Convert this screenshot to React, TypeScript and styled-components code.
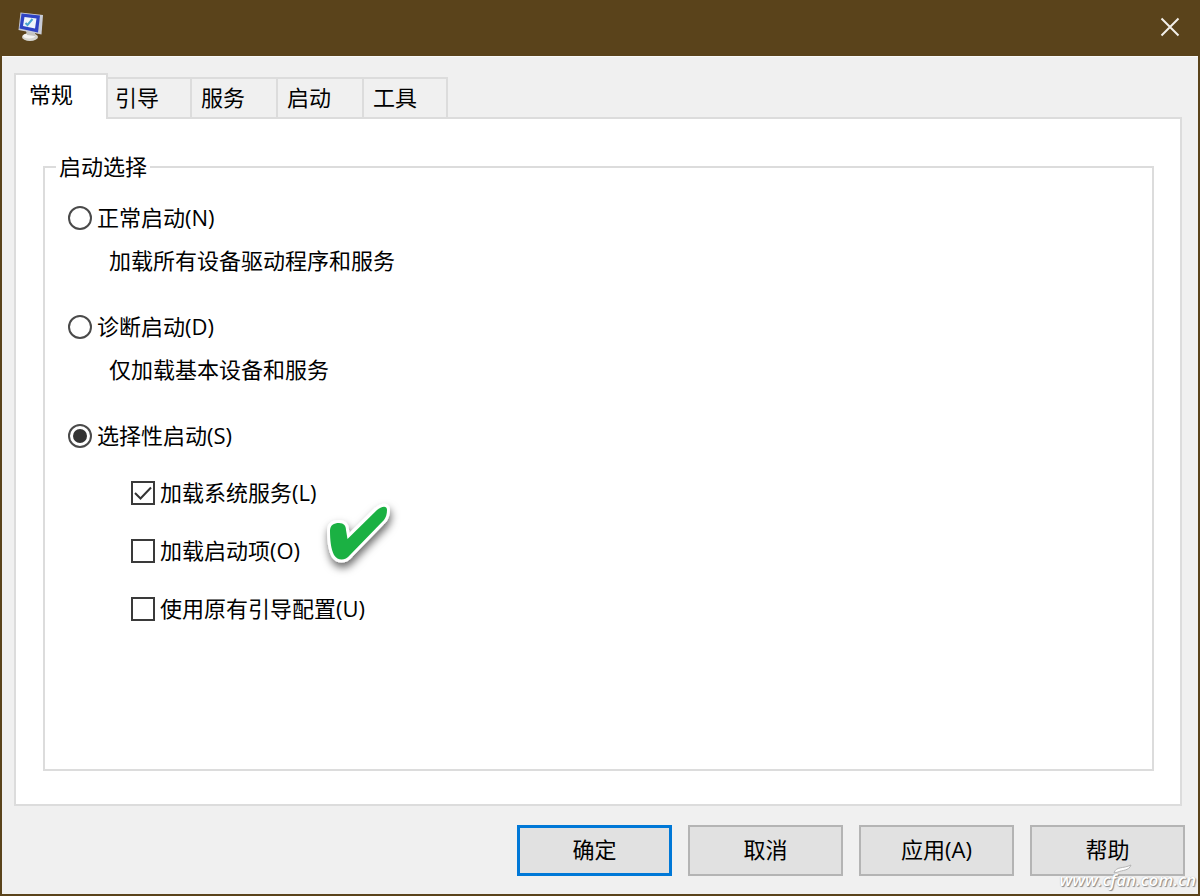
import React, { useState } from "react";
import styled, { createGlobalStyle } from "styled-components";

const FONT = '"Open Sans", "Noto Sans CJK SC", sans-serif';
const LINE = "#dcdcdc";
const FACE = "#f0f0f0";
const FRAME = "#5a431b";
const INK = "#000";

const GlobalStyle = createGlobalStyle`
  *, *::before, *::after { box-sizing: border-box; }
  body { margin: 0; background: ${FACE}; }
  button, input { font: inherit; color: inherit; margin: 0; }
`;

const Window = styled.div`
  position: relative;
  display: flex;
  flex-direction: column;
  min-height: 100vh;
  border: 2px solid ${FRAME};
  border-top: 0;
  background: ${FACE};
  color: ${INK};
  font-family: ${FONT};
  font-size: 22px;
  line-height: 28px;
`;

const TitleBar = styled.header`
  display: flex;
  align-items: center;
  justify-content: space-between;
  height: 56px;
  padding: 0 16px 2px 14px;
  background: ${FRAME};
`;

const CloseButton = styled.button`
  display: flex;
  padding: 0;
  border: 0;
  background: none;
`;

const Content = styled.main`
  flex: 1;
  display: flex;
  flex-direction: column;
  padding: 16px 16px 0 12px;
  border-top: 1px solid #fafafa;
`;

const TabList = styled.div`
  display: flex;
  align-items: flex-end;
  padding-left: 4px;
`;

const Tab = styled.button<{ $active: boolean }>`
  position: relative;
  z-index: ${(p) => (p.$active ? 1 : 0)};
  width: ${(p) => (p.$active ? 94 : 86)}px;
  height: ${(p) => (p.$active ? 46 : 40)}px;
  margin: ${(p) => (p.$active ? "0 -4px -2px" : "0")};
  padding: ${(p) => (p.$active ? "0 0 7px 13px" : "0 0 2px 9px")};
  border: 2px solid ${LINE};
  border-width: 2px 0 0 2px;
  background: ${(p) => (p.$active ? "#fff" : FACE)};
  text-align: left;
  box-shadow: ${(p) => (p.$active ? `inset -2px 0 0 ${LINE}` : "none")};

  &:last-child {
    border-right-width: 2px;
  }
`;

const Panel = styled.section`
  flex: 1;
  display: flex;
  padding: 33px 26px 33px 27px;
  border: 2px solid ${LINE};
  background: #fff;
`;

const Group = styled.fieldset`
  flex: 1;
  min-width: 0;
  margin: 0;
  padding: 0 23px 24px;
  border: 2px solid ${LINE};
`;

const Legend = styled.legend`
  margin-left: -12px;
  padding: 0 3px 2px;
`;

const Choices = styled.div`
  display: flex;
  flex-direction: column;
  gap: 38px;
  padding-top: 22px;
`;

const Choice = styled.div`
  display: flex;
  flex-direction: column;
  align-items: flex-start;
`;

const Option = styled.label`
  display: flex;
  align-items: center;
  gap: 5px;
  height: 28px;
`;

const OptionText = styled.span`
  padding-bottom: 2px;
`;

const Radio = styled.input`
  appearance: none;
  display: grid;
  place-items: center;
  width: 24px;
  height: 24px;
  border: 2px solid #4a4a4a;
  border-radius: 50%;
  background: #fff;

  &:checked::before {
    content: "";
    width: 14px;
    height: 14px;
    border-radius: 50%;
    background: #333;
  }
`;

const Hint = styled.p`
  margin: 14px 0 1px 41px;
`;

const CheckList = styled.div`
  position: relative;
  display: flex;
  flex-direction: column;
  gap: 30px;
  margin: 29px 0 0 63px;
`;

const CheckFrame = styled.span`
  display: grid;
  width: 24px;
  height: 24px;

  > * {
    grid-area: 1 / 1;
  }
`;

const Checkbox = styled.input`
  appearance: none;
  width: 24px;
  height: 24px;
  border: 2px solid #3a3a3a;
  background: #fff;

  & + svg {
    visibility: hidden;
    pointer-events: none;
  }
  &:checked + svg {
    visibility: visible;
  }
`;

const GreenTick = styled.svg`
  position: absolute;
  left: 189px;
  top: 16px;
  overflow: visible;
`;

const Footer = styled.footer`
  display: flex;
  flex-wrap: wrap;
  justify-content: flex-end;
  gap: 16px;
  padding: 19px 13px 18px;
`;

const PushButton = styled.button<{ $primary?: boolean }>`
  width: 155px;
  height: 51px;
  padding: 0 0 4px;
  border: ${(p) => (p.$primary ? "3px solid #0078d7" : "2px solid #b4b4b4")};
  background: #e1e1e1;
`;

const Watermark = styled.div`
  position: absolute;
  right: 2px;
  bottom: 2px;
  color: #fff;
  font: italic 600 17px/24px "Open Sans", sans-serif;
  text-shadow: 1px 1px 1px #888, 0 0 1px #aaa;
  pointer-events: none;
`;

const Leaf = styled.svg`
  position: absolute;
  left: 54px;
  top: -4px;
`;

function MonitorIcon() {
  return (
    <svg width="30" height="32" viewBox="0 0 30 32" aria-hidden="true">
      <ellipse cx="14" cy="26" rx="8" ry="4" fill="#d5d5cf" />
      <ellipse cx="13" cy="25" rx="6" ry="2.6" fill="#f3f3f0" />
      <path d="M10 20l9 1 0 4-8-1z" fill="#c4c4c0" />
      <path d="M4.500 1.500L27 4l-1.500 19.500L2.500 19z" fill="#c9ccd6" />
      <path d="M5.500 2.500L24 4.500l-2 17L3.500 17.500z" fill="#2f43c4" />
      <path d="M8.500 6l12 1.500-1.500 10L7 15z" fill="#f0f5fa" />
      <path d="M9.500 12l2 2L16.500 8" fill="none" stroke="#48a4cf" strokeWidth="2" />
    </svg>
  );
}

const tabs = ["常规", "引导", "服务", "启动", "工具"];

export default function App() {
  const [tab, setTab] = useState(0);
  const [mode, setMode] = useState("selective");

  const radio = (value: string, label: string) => (
    <Option>
      <Radio
        type="radio"
        name="startup"
        value={value}
        checked={mode === value}
        onChange={() => setMode(value)}
      />
      <OptionText>{label}</OptionText>
    </Option>
  );

  const check = (label: string, on = false) => (
    <Option>
      <CheckFrame>
        <Checkbox type="checkbox" defaultChecked={on} />
        <svg width="24" height="24" viewBox="0 0 24 24" aria-hidden="true">
          <path d="M4 12l5.500 5.500L20 6.500" fill="none" stroke="#333" strokeWidth="2" />
        </svg>
      </CheckFrame>
      <OptionText>{label}</OptionText>
    </Option>
  );

  return (
    <>
      <GlobalStyle />
      <Window>
        <TitleBar>
          <MonitorIcon />
          <CloseButton type="button" aria-label="关闭">
            <svg width="24" height="24" viewBox="0 0 24 24" aria-hidden="true">
              <path d="M3.500 3.500l17 17M20.500 3.500l-17 17" stroke="#f2efe9" strokeWidth="2" />
            </svg>
          </CloseButton>
        </TitleBar>

        <Content>
          <TabList role="tablist">
            {tabs.map((name, i) => (
              <Tab
                key={name}
                type="button"
                role="tab"
                aria-selected={tab === i}
                $active={tab === i}
                onClick={() => setTab(i)}
              >
                {name}
              </Tab>
            ))}
          </TabList>

          <Panel role="tabpanel">
            <Group>
              <Legend>启动选择</Legend>
              <Choices>
                <Choice>
                  {radio("normal", "正常启动(N)")}
                  <Hint>加载所有设备驱动程序和服务</Hint>
                </Choice>
                <Choice>
                  {radio("diagnostic", "诊断启动(D)")}
                  <Hint>仅加载基本设备和服务</Hint>
                </Choice>
                <Choice>
                  {radio("selective", "选择性启动(S)")}
                  <CheckList>
                    {check("加载系统服务(L)", true)}
                    {check("加载启动项(O)")}
                    {check("使用原有引导配置(U)")}
                    <GreenTick width="80" height="85" viewBox="0 0 80 85" aria-hidden="true">
                      <defs>
                        <filter id="tick-shadow" x="-30%" y="-30%" width="160%" height="170%">
                          <feDropShadow dx="1" dy="5" stdDeviation="4" floodColor="#000" floodOpacity="0.6" />
                        </filter>
                      </defs>
                      <path
                        d="M10 36C10 30 14 28 19 28C24 28 26 31 26 35L27.500 44L57 15C61 11.500 67 10 67 15C67 19 66 22 64 25L30 60C25 66 18 66 14 60C11 54 10 45 10 36Z"
                        fill="#fff"
                        stroke="#fff"
                        strokeWidth="6"
                        strokeLinejoin="round"
                        filter="url(#tick-shadow)"
                      />
                      <path
                        d="M10 36C10 30 14 28 19 28C24 28 26 31 26 35L27.500 44L57 15C61 11.500 67 10 67 15C67 19 66 22 64 25L30 60C25 66 18 66 14 60C11 54 10 45 10 36Z"
                        fill="#1bb143"
                      />
                    </GreenTick>
                  </CheckList>
                </Choice>
              </Choices>
            </Group>
          </Panel>
        </Content>

        <Footer>
          <PushButton type="button" $primary>确定</PushButton>
          <PushButton type="button">取消</PushButton>
          <PushButton type="button">应用(A)</PushButton>
          <PushButton type="button">帮助</PushButton>
        </Footer>

        <Watermark>
          www.cfan.com.cn
          <Leaf width="20" height="10" viewBox="0 0 20 10" aria-hidden="true">
            <path d="M1 9C3 2 10 5 18 1C16 7 9 6 5 8Z" fill="#fff" stroke="#b4b4b4" strokeWidth="1" />
          </Leaf>
        </Watermark>
      </Window>
    </>
  );
}
